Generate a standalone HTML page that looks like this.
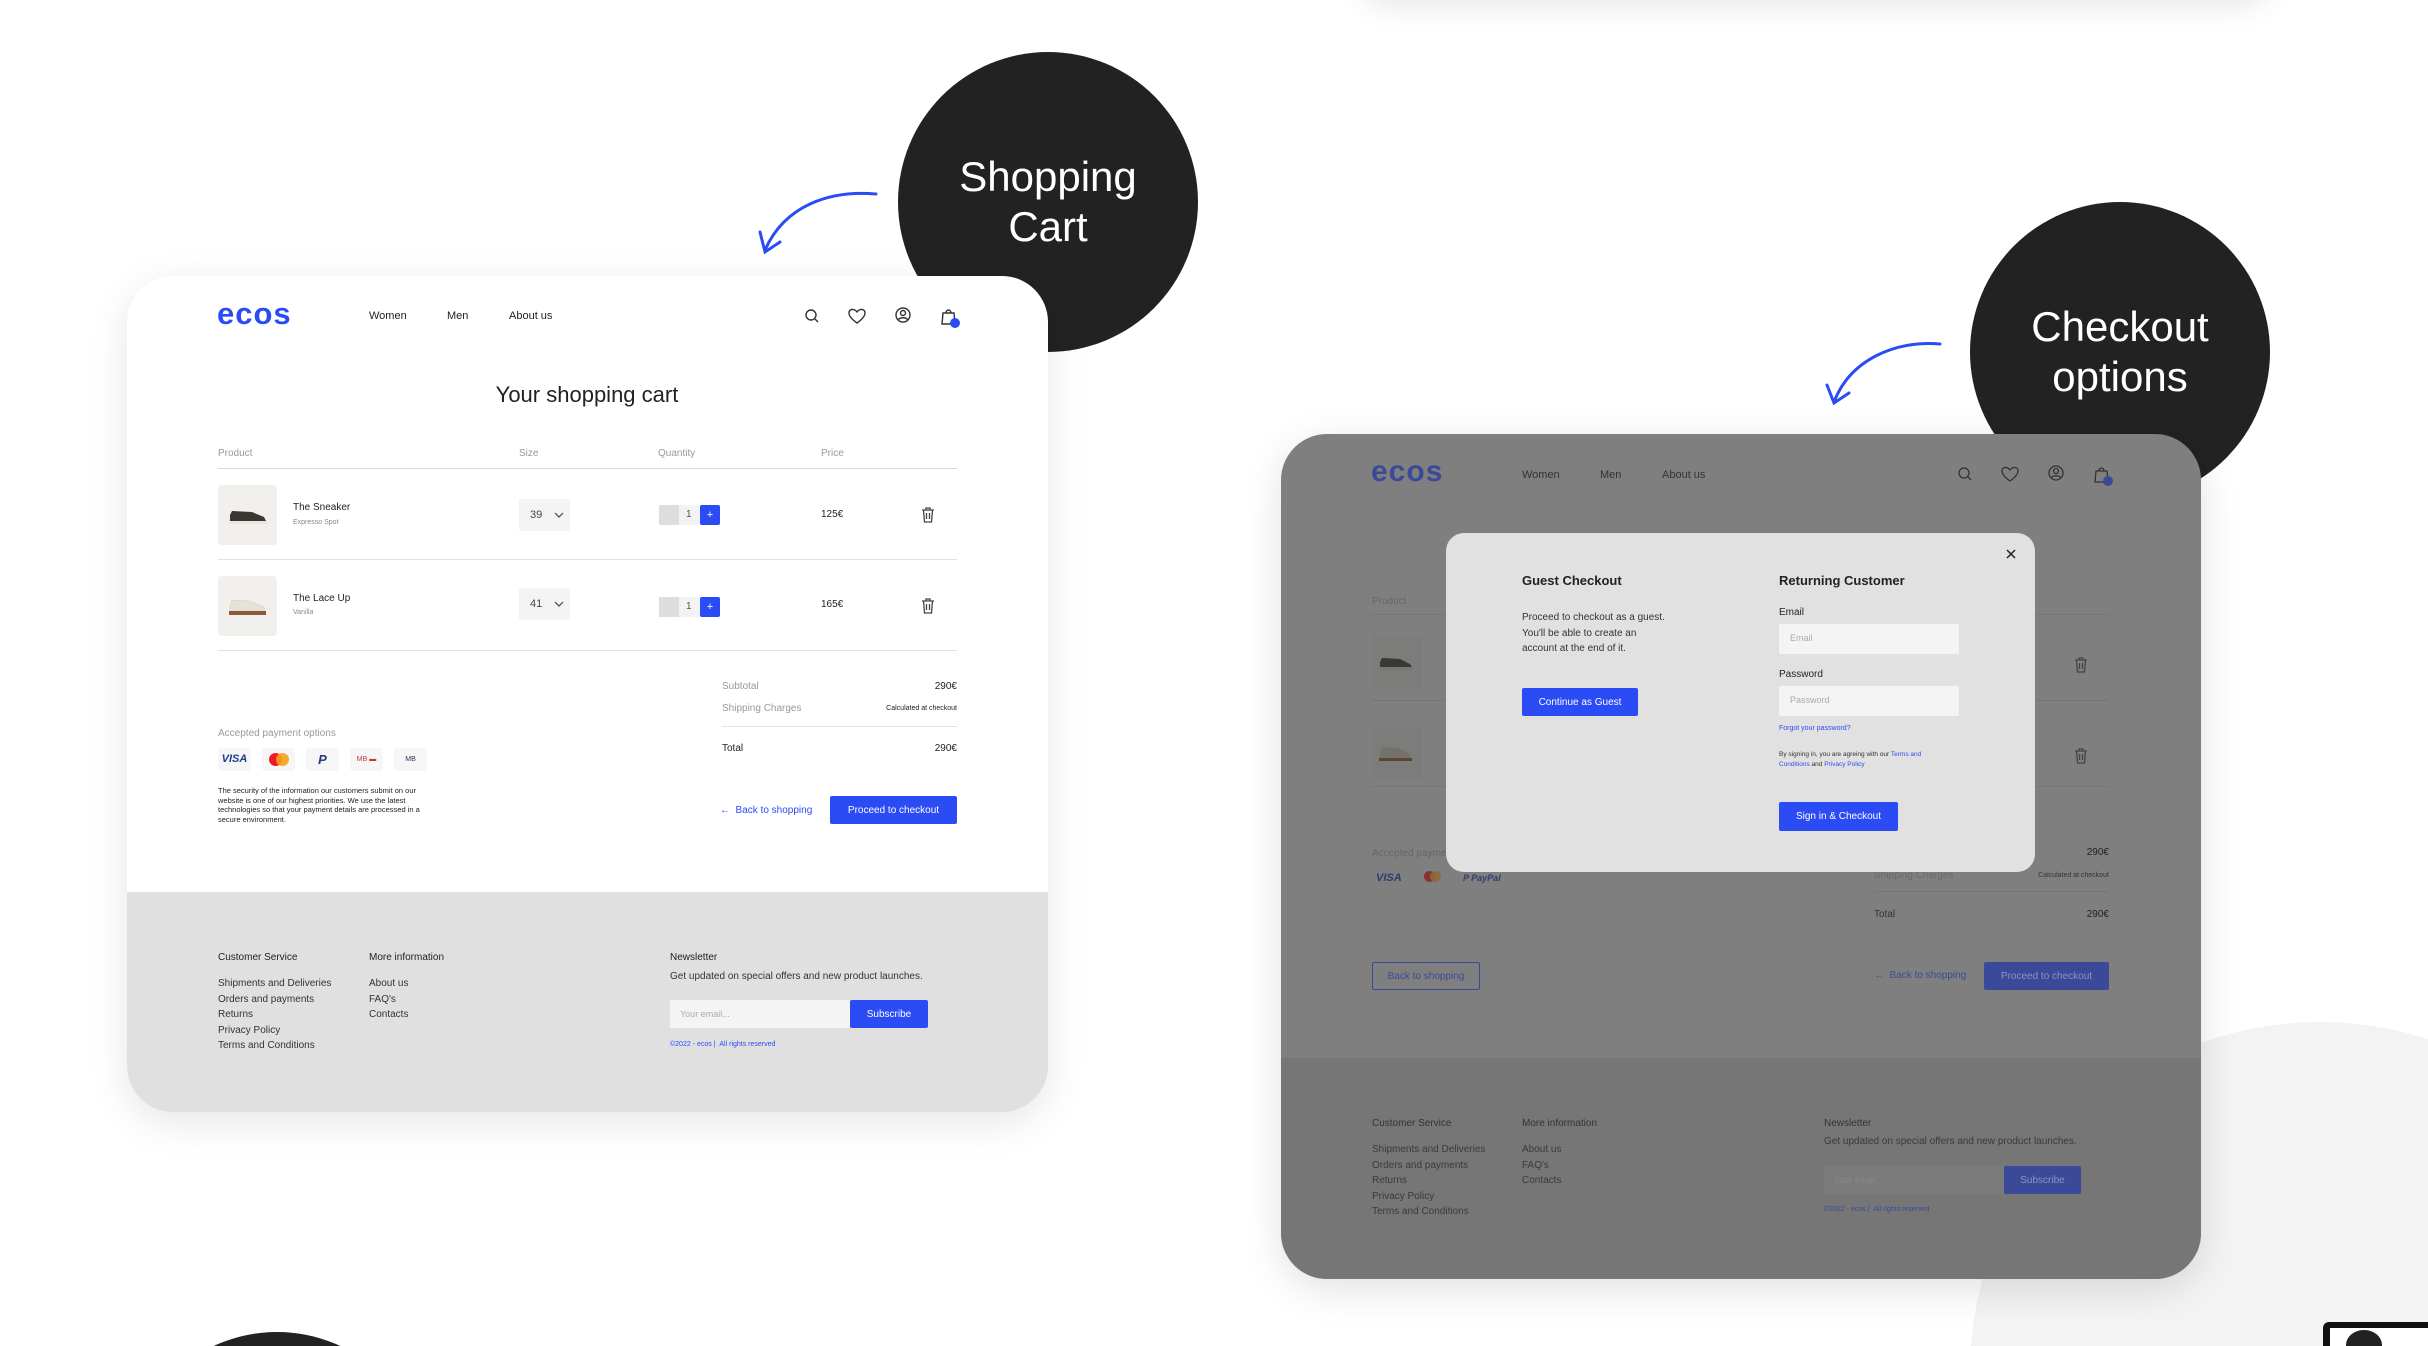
<!DOCTYPE html>
<html><head><meta charset="utf-8">
<style>
*{margin:0;padding:0;box-sizing:border-box}
html,body{width:2428px;height:1346px;overflow:hidden;background:#fff}
body{font-family:"Liberation Sans",sans-serif;color:#222}
#wrap{position:relative;width:2428px;height:1346px;overflow:hidden;background:#fff}
.a{position:absolute;white-space:nowrap;line-height:1}
.circ{position:absolute;border-radius:50%;background:#222}
.ct{position:absolute;color:#fff;text-align:center;font-size:42px;line-height:50px;width:300px}
.card{position:absolute;border-radius:46px;overflow:hidden}
.blue{color:#2b4cf5}
.btn{position:absolute;background:#2b4cf5;color:#fff;font-size:11px;display:flex;align-items:center;justify-content:center;border-radius:2px}
.line{position:absolute;height:1px;background:#e2e2e2}
</style></head><body><div id="wrap">

<div style="position:absolute;left:1355px;top:-300px;width:920px;height:300px;border-radius:40px;box-shadow:0 6px 30px rgba(0,0,0,.10);background:#fff"></div>
<div style="position:absolute;left:1970px;top:1022px;width:700px;height:700px;border-radius:50%;background:#f3f3f3"></div>
<div class="circ" style="left:127px;top:1332px;width:300px;height:300px"></div>
<div style="position:absolute;left:2323px;top:1322px;width:120px;height:40px;background:#111;border-radius:6px"></div>
<div style="position:absolute;left:2330px;top:1328px;width:110px;height:30px;background:#fff"></div>
<div style="position:absolute;left:2346px;top:1330px;width:36px;height:30px;border-radius:50%;background:#222"></div>

<div class="circ" style="left:898px;top:52px;width:300px;height:300px"></div>
<div class="ct" style="left:898px;top:152px">Shopping<br>Cart</div>
<div class="circ" style="left:1970px;top:202px;width:300px;height:300px"></div>
<div class="ct" style="left:1970px;top:302px">Checkout<br>options</div>

<svg style="position:absolute;left:0;top:0" width="2428" height="1346">
<path d="M876 194 C830 190 785 205 765 250" stroke="#2b4cf5" stroke-width="3" fill="none" stroke-linecap="round"/>
<path d="M760 232 L765 252 L780 242" stroke="#2b4cf5" stroke-width="3" fill="none" stroke-linecap="round"/>
<path d="M1940 344 C1895 340 1850 360 1834 402" stroke="#2b4cf5" stroke-width="3" fill="none" stroke-linecap="round"/>
<path d="M1827 385 L1834 403 L1849 393" stroke="#2b4cf5" stroke-width="3" fill="none" stroke-linecap="round"/>
</svg>

<!-- LEFT CARD -->
<div class="card" style="left:127px;top:276px;width:921px;height:836px;background:#fff;box-shadow:0 10px 40px rgba(0,0,0,.10)">
  <div style="position:absolute;left:0;top:616px;width:921px;height:220px;background:#e0e0e0"></div>
</div>
<div class="a blue" style="left:217px;top:298px;font-size:31px;font-weight:bold;letter-spacing:1px">ecos</div>
<div class="a" style="left:369px;top:311px;font-size:11px">Women</div>
<div class="a" style="left:447px;top:311px;font-size:11px">Men</div>
<div class="a" style="left:509px;top:311px;font-size:11px">About us</div>
<svg style="position:absolute;left:800px;top:303px" width="170" height="30" fill="none" stroke="#333" stroke-width="1.4">
<circle cx="11" cy="12" r="5"/><path d="M15 16 L18 19"/>
<path d="M57 20 C50 15 49 12 49 10 C49 6 54 5 57 9 C60 5 65 6 65 10 C65 12 64 15 57 20Z"/>
<circle cx="103" cy="12" r="7"/><circle cx="103" cy="10" r="2.5"/><path d="M98 17 C100 14 106 14 108 17"/>
<path d="M143 10 H154 L155 21 H142Z"/><path d="M146 10 C146 6 151 6 151 10"/>
<circle cx="155" cy="20" r="5" fill="#2b4cf5" stroke="none"/>
</svg>
<div class="a" style="left:0;width:1174px;text-align:center;top:384px;font-size:22px">Your shopping cart</div>

<div class="a" style="left:218px;top:449px;font-size:10px;color:#999">Product</div>
<div class="a" style="left:519px;top:449px;font-size:10px;color:#999">Size</div>
<div class="a" style="left:658px;top:449px;font-size:10px;color:#999">Quantity</div>
<div class="a" style="left:821px;top:449px;font-size:10px;color:#999">Price</div>
<div class="line" style="left:218px;top:468px;width:739px;background:#d8d8d8"></div>

<div style="position:absolute;left:218px;top:485px;width:59px;height:60px;background:#f1f0ec;border-radius:4px"></div>
<svg style="position:absolute;left:218px;top:485px" width="59" height="60"><path d="M12 30 L14 26 L34 27 L46 32 L48 36 L12 36Z" fill="#3b3632"/><rect x="11" y="36" width="38" height="3" fill="#e8e6df"/></svg>
<div class="a" style="left:293px;top:503px;font-size:10px">The Sneaker</div>
<div class="a" style="left:293px;top:519px;font-size:7px;color:#888">Expresso Spot</div>
<div style="position:absolute;left:519px;top:499px;width:51px;height:32px;background:#f4f4f4;border-radius:2px"></div>
<div class="a" style="left:530px;top:510px;font-size:11px;color:#444">39</div>
<svg style="position:absolute;left:554px;top:511px" width="10" height="8"><path d="M1 2 L5 6 L9 2" stroke="#444" fill="none" stroke-width="1.2"/></svg>
<div style="position:absolute;left:659px;top:505px;width:20px;height:20px;background:#ddd;border-radius:2px 0 0 2px"></div>
<div style="position:absolute;left:679px;top:505px;width:21px;height:20px;background:#f3f3f3"></div>
<div class="a" style="left:686px;top:510px;font-size:10px;color:#555">1</div>
<div class="btn" style="left:700px;top:505px;width:20px;height:20px;font-size:11px">+</div>
<div class="a" style="left:821px;top:510px;font-size:10px">125€</div>
<svg style="position:absolute;left:920px;top:506px" width="16" height="18" fill="none" stroke="#444" stroke-width="1.3"><path d="M2 4 H14 M6 4 V2 H10 V4 M3.5 4 L4.5 16 H11.5 L12.5 4 M6.5 7 V13 M9.5 7 V13"/></svg>
<div class="line" style="left:218px;top:559px;width:739px"></div>

<div style="position:absolute;left:218px;top:576px;width:59px;height:60px;background:#f1f0ec;border-radius:4px"></div>
<svg style="position:absolute;left:218px;top:576px" width="59" height="60"><path d="M12 30 L14 24 L32 25 L46 31 L47 35 L12 35Z" fill="#e6e2d8" stroke="#ccc" stroke-width=".5"/><rect x="11" y="35" width="37" height="4" fill="#8a5a3a"/></svg>
<div class="a" style="left:293px;top:594px;font-size:10px">The Lace Up</div>
<div class="a" style="left:293px;top:609px;font-size:7px;color:#888">Vanilla</div>
<div style="position:absolute;left:519px;top:588px;width:51px;height:32px;background:#f4f4f4;border-radius:2px"></div>
<div class="a" style="left:530px;top:599px;font-size:11px;color:#444">41</div>
<svg style="position:absolute;left:554px;top:600px" width="10" height="8"><path d="M1 2 L5 6 L9 2" stroke="#444" fill="none" stroke-width="1.2"/></svg>
<div style="position:absolute;left:659px;top:597px;width:20px;height:20px;background:#ddd"></div>
<div style="position:absolute;left:679px;top:597px;width:21px;height:20px;background:#f3f3f3"></div>
<div class="a" style="left:686px;top:602px;font-size:10px;color:#555">1</div>
<div class="btn" style="left:700px;top:597px;width:20px;height:20px">+</div>
<div class="a" style="left:821px;top:600px;font-size:10px">165€</div>
<svg style="position:absolute;left:920px;top:597px" width="16" height="18" fill="none" stroke="#444" stroke-width="1.3"><path d="M2 4 H14 M6 4 V2 H10 V4 M3.5 4 L4.5 16 H11.5 L12.5 4 M6.5 7 V13 M9.5 7 V13"/></svg>
<div class="line" style="left:218px;top:650px;width:739px"></div>

<div class="a" style="left:722px;top:682px;font-size:10px;color:#999">Subtotal</div>
<div class="a" style="left:857px;width:100px;text-align:right;top:682px;font-size:10px">290€</div>
<div class="a" style="left:722px;top:704px;font-size:10px;color:#999">Shipping Charges</div>
<div class="a" style="left:857px;width:100px;text-align:right;top:705px;font-size:7px">Calculated at checkout</div>
<div class="line" style="left:722px;top:726px;width:235px"></div>
<div class="a" style="left:722px;top:744px;font-size:10px">Total</div>
<div class="a" style="left:857px;width:100px;text-align:right;top:744px;font-size:10px">290€</div>
<div class="a" style="left:218px;top:729px;font-size:10px;color:#999">Accepted payment options</div>
<div style="position:absolute;left:218px;top:748px;width:33px;height:23px;background:#f6f6f6;border-radius:4px;font:bold italic 11px 'Liberation Sans';color:#1a3d8f;text-align:center;line-height:23px">VISA</div>
<div style="position:absolute;left:262px;top:748px;width:33px;height:23px;background:#f6f6f6;border-radius:4px"></div>
<div style="position:absolute;left:269px;top:753px;width:13px;height:13px;border-radius:50%;background:#eb1c26"></div>
<div style="position:absolute;left:276px;top:753px;width:13px;height:13px;border-radius:50%;background:#f99f1b;opacity:.9"></div>
<div style="position:absolute;left:306px;top:748px;width:33px;height:23px;background:#f6f6f6;border-radius:4px;font:bold italic 13px 'Liberation Sans';color:#253b80;text-align:center;line-height:23px">P</div>
<div style="position:absolute;left:350px;top:748px;width:33px;height:23px;background:#f6f6f6;border-radius:4px;font:7px 'Liberation Sans';color:#c33;text-align:center;line-height:23px">MB ▬</div>
<div style="position:absolute;left:394px;top:748px;width:33px;height:23px;background:#f6f6f6;border-radius:4px;font:7px 'Liberation Sans';color:#335;text-align:center;line-height:23px">MB</div>
<div class="a" style="left:218px;top:786px;font-size:7.5px;line-height:9.5px;white-space:normal;width:215px;color:#222">The security of the information our customers submit on our website is one of our highest priorities. We use the latest technologies so that your payment details are processed in a secure environment.</div>
<div class="a blue" style="left:720px;top:806px;font-size:10px">←&nbsp; Back to shopping</div>
<div class="btn" style="left:830px;top:796px;width:127px;height:28px;font-size:10px">Proceed to checkout</div>

<div class="a" style="left:218px;top:953px;font-size:10px">Customer Service</div>
<div class="a" style="left:218px;top:976px;font-size:10px;line-height:15.5px;color:#333">Shipments and Deliveries<br>Orders and payments<br>Returns<br>Privacy Policy<br>Terms and Conditions</div>
<div class="a" style="left:369px;top:953px;font-size:10px">More information</div>
<div class="a" style="left:369px;top:976px;font-size:10px;line-height:15.5px;color:#333">About us<br>FAQ's<br>Contacts</div>
<div class="a" style="left:670px;top:953px;font-size:10px">Newsletter</div>
<div class="a" style="left:670px;top:972px;font-size:10px;color:#333">Get updated on special offers and new product launches.</div>
<div style="position:absolute;left:670px;top:1000px;width:180px;height:28px;background:#f4f4f4"></div>
<div class="a" style="left:680px;top:1010px;font-size:9px;color:#aaa">Your email...</div>
<div class="btn" style="left:850px;top:1000px;width:78px;height:28px;font-size:10px">Subscribe</div>
<div class="a blue" style="left:670px;top:1041px;font-size:7px">©2022 - ecos | &nbsp;All rights reserved</div>

<!-- RIGHT CARD -->
<div class="card" style="left:1281px;top:434px;width:920px;height:845px;background:#7f7f7f;box-shadow:0 10px 40px rgba(0,0,0,.12)">
  <div style="position:absolute;left:0;top:624px;width:920px;height:221px;background:#767676"></div>
</div>
<div class="a" style="left:1371px;top:457px;font-size:30px;font-weight:bold;color:#3b4a98;letter-spacing:1px">ecos</div>
<div class="a" style="left:1522px;top:470px;font-size:11px;color:#333">Women</div>
<div class="a" style="left:1600px;top:470px;font-size:11px;color:#333">Men</div>
<div class="a" style="left:1662px;top:470px;font-size:11px;color:#333">About us</div>
<svg style="position:absolute;left:1953px;top:461px" width="170" height="30" fill="none" stroke="#333" stroke-width="1.3">
<circle cx="11" cy="12" r="5"/><path d="M15 16 L18 19"/>
<path d="M57 20 C50 15 49 12 49 10 C49 6 54 5 57 9 C60 5 65 6 65 10 C65 12 64 15 57 20Z"/>
<circle cx="103" cy="12" r="7"/><circle cx="103" cy="10" r="2.5"/><path d="M98 17 C100 14 106 14 108 17"/>
<path d="M143 10 H154 L155 21 H142Z"/><path d="M146 10 C146 6 151 6 151 10"/>
<circle cx="155" cy="20" r="5" fill="#3b4a98" stroke="none"/>
</svg>
<div class="a" style="left:1372px;top:597px;font-size:10px;color:#666">Product</div>
<div class="line" style="left:1372px;top:614px;width:737px;background:#757575"></div>
<div style="position:absolute;left:1372px;top:636px;width:50px;height:52px;background:#7c7c7a"></div>
<svg style="position:absolute;left:1372px;top:636px" width="50" height="52"><path d="M8 26 L10 22 L28 23 L38 28 L40 31 L8 31Z" fill="#3a3835"/><rect x="7" y="31" width="34" height="3" fill="#777"/></svg>
<svg style="position:absolute;left:2073px;top:656px" width="16" height="18" fill="none" stroke="#444" stroke-width="1.3"><path d="M2 4 H14 M6 4 V2 H10 V4 M3.5 4 L4.5 16 H11.5 L12.5 4 M6.5 7 V13 M9.5 7 V13"/></svg>
<div class="line" style="left:1372px;top:700px;width:737px;background:#757575"></div>
<div style="position:absolute;left:1372px;top:727px;width:50px;height:52px;background:#7c7c7a"></div>
<svg style="position:absolute;left:1372px;top:727px" width="50" height="52"><path d="M8 26 L10 20 L27 21 L38 27 L39 31 L8 31Z" fill="#74716b"/><rect x="7" y="31" width="33" height="3" fill="#5a4534"/></svg>
<svg style="position:absolute;left:2073px;top:747px" width="16" height="18" fill="none" stroke="#444" stroke-width="1.3"><path d="M2 4 H14 M6 4 V2 H10 V4 M3.5 4 L4.5 16 H11.5 L12.5 4 M6.5 7 V13 M9.5 7 V13"/></svg>
<div class="line" style="left:1372px;top:786px;width:737px;background:#757575"></div>
<div class="a" style="left:1372px;top:849px;font-size:10px;color:#666">Accepted payment options</div>
<div class="a" style="left:1376px;top:872px;font:bold italic 11px 'Liberation Sans';color:#2e3e6e">VISA</div>
<div style="position:absolute;left:1424px;top:871px;width:11px;height:11px;border-radius:50%;background:#8a3036"></div>
<div style="position:absolute;left:1430px;top:871px;width:11px;height:11px;border-radius:50%;background:#8d6a37;opacity:.9"></div>
<div class="a" style="left:1463px;top:873px;font:italic bold 9px 'Liberation Sans';color:#2e3e6e">P PayPal</div>
<div class="a" style="left:2009px;width:100px;text-align:right;top:848px;font-size:10px;color:#222">290€</div>
<div class="a" style="left:1874px;top:871px;font-size:10px;color:#6a6a6a">Shipping Charges</div>
<div class="a" style="left:2009px;width:100px;text-align:right;top:872px;font-size:7px;color:#333">Calculated at checkout</div>
<div class="line" style="left:1874px;top:891px;width:235px;background:#757575"></div>
<div class="a" style="left:1874px;top:910px;font-size:10px;color:#333">Total</div>
<div class="a" style="left:2009px;width:100px;text-align:right;top:910px;font-size:10px;color:#222">290€</div>
<div style="position:absolute;left:1372px;top:962px;width:108px;height:28px;border:1px solid #3b4a98;border-radius:2px;color:#3b4a98;font-size:10px;display:flex;align-items:center;justify-content:center">Back to shopping</div>
<div class="a" style="left:1874px;top:971px;font-size:10px;color:#3b4a98">←&nbsp; Back to shopping</div>
<div class="btn" style="left:1984px;top:962px;width:125px;height:28px;background:#3b4a98;color:#8a93c4;font-size:10px">Proceed to checkout</div>
<div class="a" style="left:1372px;top:1119px;font-size:10px;color:#333">Customer Service</div>
<div class="a" style="left:1372px;top:1142px;font-size:10px;line-height:15.5px;color:#3a3a3a">Shipments and Deliveries<br>Orders and payments<br>Returns<br>Privacy Policy<br>Terms and Conditions</div>
<div class="a" style="left:1522px;top:1119px;font-size:10px;color:#333">More information</div>
<div class="a" style="left:1522px;top:1142px;font-size:10px;line-height:15.5px;color:#3a3a3a">About us<br>FAQ's<br>Contacts</div>
<div class="a" style="left:1824px;top:1119px;font-size:10px;color:#333">Newsletter</div>
<div class="a" style="left:1824px;top:1137px;font-size:10px;color:#3a3a3a">Get updated on special offers and new product launches.</div>
<div style="position:absolute;left:1824px;top:1166px;width:180px;height:28px;background:#7b7b7b"></div>
<div class="a" style="left:1834px;top:1176px;font-size:9px;color:#888">Your email...</div>
<div class="btn" style="left:2004px;top:1166px;width:77px;height:28px;background:#3b4a98;color:#8a93c4;font-size:10px">Subscribe</div>
<div class="a" style="left:1824px;top:1206px;font-size:7px;color:#3b4a98">©2022 - ecos | &nbsp;All rights reserved</div>

<!-- MODAL -->
<div style="position:absolute;left:1446px;top:533px;width:589px;height:339px;background:#e1e1e1;border-radius:18px"></div>
<svg style="position:absolute;left:2005px;top:548px" width="12" height="12"><path d="M2 2 L10 10 M10 2 L2 10" stroke="#222" stroke-width="1.5"/></svg>
<div class="a" style="left:1522px;top:574px;font-size:13px;font-weight:bold">Guest Checkout</div>
<div class="a" style="left:1522px;top:610px;font-size:10px;line-height:15.5px;color:#333">Proceed to checkout as a guest.<br>You'll be able to create an<br>account at the end of it.</div>
<div class="btn" style="left:1522px;top:688px;width:116px;height:28px;font-size:10px">Continue as Guest</div>
<div class="a" style="left:1779px;top:574px;font-size:13px;font-weight:bold">Returning Customer</div>
<div class="a" style="left:1779px;top:608px;font-size:10px">Email</div>
<div style="position:absolute;left:1779px;top:624px;width:180px;height:30px;background:#f4f4f4;border-radius:2px"></div>
<div class="a" style="left:1790px;top:634px;font-size:9px;color:#aaa">Email</div>
<div class="a" style="left:1779px;top:670px;font-size:10px">Password</div>
<div style="position:absolute;left:1779px;top:686px;width:180px;height:30px;background:#f4f4f4;border-radius:2px"></div>
<div class="a" style="left:1790px;top:696px;font-size:9px;color:#aaa">Password</div>
<div class="a blue" style="left:1779px;top:725px;font-size:7px">Forgot your password?</div>
<div class="a" style="left:1779px;top:750px;font-size:6.5px;line-height:10px;color:#333">By signing in, you are agreing with our <span class="blue">Terms and</span><br><span class="blue">Conditions</span> and <span class="blue">Privacy Policy</span></div>
<div class="btn" style="left:1779px;top:802px;width:119px;height:29px;font-size:10px">Sign in &amp; Checkout</div>

</div></body></html>
